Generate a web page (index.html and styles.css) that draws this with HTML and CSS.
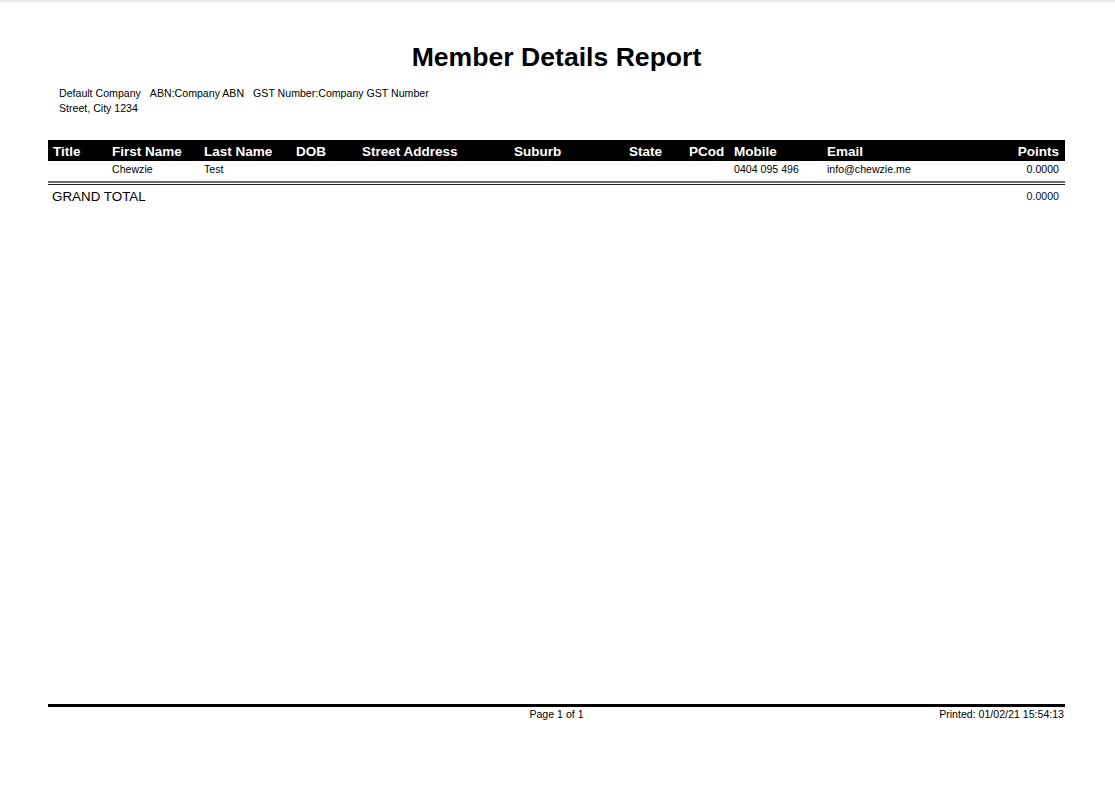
FILE: index.html
```html
<!DOCTYPE html>
<html>
<head>
<meta charset="utf-8">
<title>Member Details Report</title>
<link rel="stylesheet" href="styles.css">
</head>
<body>
<div class="topshade"></div>
<div class="page">
  <h1 class="report-title">Member Details Report</h1>
  <div class="company">
    <div class="company-line"><span>Default Company</span><span>ABN:Company ABN</span><span>GST Number:Company GST Number</span></div>
    <div class="company-line"><span>Street, City 1234</span></div>
  </div>
  <div class="table">
    <div class="row head">
      <div class="cell">Title</div>
      <div class="cell">First Name</div>
      <div class="cell">Last Name</div>
      <div class="cell">DOB</div>
      <div class="cell">Street Address</div>
      <div class="cell">Suburb</div>
      <div class="cell">State</div>
      <div class="cell">PCod</div>
      <div class="cell">Mobile</div>
      <div class="cell">Email</div>
      <div class="cell num">Points</div>
    </div>
    <div class="row data">
      <div class="cell"></div>
      <div class="cell">Chewzie</div>
      <div class="cell">Test</div>
      <div class="cell"></div>
      <div class="cell"></div>
      <div class="cell"></div>
      <div class="cell"></div>
      <div class="cell"></div>
      <div class="cell">0404 095 496</div>
      <div class="cell">info@chewzie.me</div>
      <div class="cell num">0.0000</div>
    </div>
    <div class="double-rule"></div>
    <div class="total">
      <div class="total-label">GRAND TOTAL</div>
      <div class="total-value">0.0000</div>
    </div>
  </div>
  <div class="spacer"></div>
  <div class="footer">
    <div class="footer-left"></div>
    <div class="footer-center">Page 1 of 1</div>
    <div class="footer-right">Printed: 01/02/21 15:54:13</div>
  </div>
</div>
</body>
</html>
```

FILE: styles.css
```css
html, body {
  margin: 0;
  padding: 0;
  background: #ffffff;
}
body {
  font-family: "Liberation Sans", Arial, sans-serif;
  color: #000;
  width: 1115px;
  height: 790px;
  overflow: hidden;
}
.topshade {
  height: 4px;
  background: linear-gradient(#e4e4e4, #ffffff);
}
.page {
  margin-left: 48px;
  width: 1017px;
  height: 786px;
  display: flex;
  flex-direction: column;
}
.report-title {
  margin: 37px 0 0 0;
  font-size: 26.6px;
  line-height: 32px;
  font-weight: bold;
  text-align: center;
}
.company {
  margin-top: 13px;
  padding-left: 11px;
  font-size: 10.6px;
  line-height: 15px;
}
.company-line {
  display: flex;
  gap: 9px;
}
.table {
  margin-top: 24px;
}
.row {
  display: grid;
  grid-template-columns: 59px 92px 92px 66px 152px 115px 60px 45px 93px 1fr 80px;
}
.row.head {
  background: #000;
  color: #fff;
  font-weight: bold;
  font-size: 13.5px;
  height: 21px;
  line-height: 23px;
}
.row .cell {
  padding-left: 5px;
  white-space: nowrap;
}
.row .cell.num {
  text-align: right;
  padding-right: 6px;
}
.row.data {
  font-size: 10.6px;
  line-height: 16px;
  height: 16px;
}
.double-rule {
  margin-top: 4px;
  height: 1px;
  border-top: 2px solid #6e6e6e;
  border-bottom: 1px solid #222;
}
.total {
  display: flex;
  justify-content: space-between;
  align-items: center;
  height: 22px;
}
.total-label {
  font-size: 13.4px;
  padding-left: 4px;
}
.total-value {
  font-size: 10.6px;
  color: #00103a;
  padding-right: 6px;
}
.spacer {
  height: 497px;
}
.footer {
  border-top: 3px solid #000;
  display: grid;
  grid-template-columns: 1fr auto 1fr;
  font-size: 10.6px;
  line-height: 14px;
}
.footer-center {
  text-align: center;
}
.footer-right {
  text-align: right;
  padding-right: 1px;
}
```
